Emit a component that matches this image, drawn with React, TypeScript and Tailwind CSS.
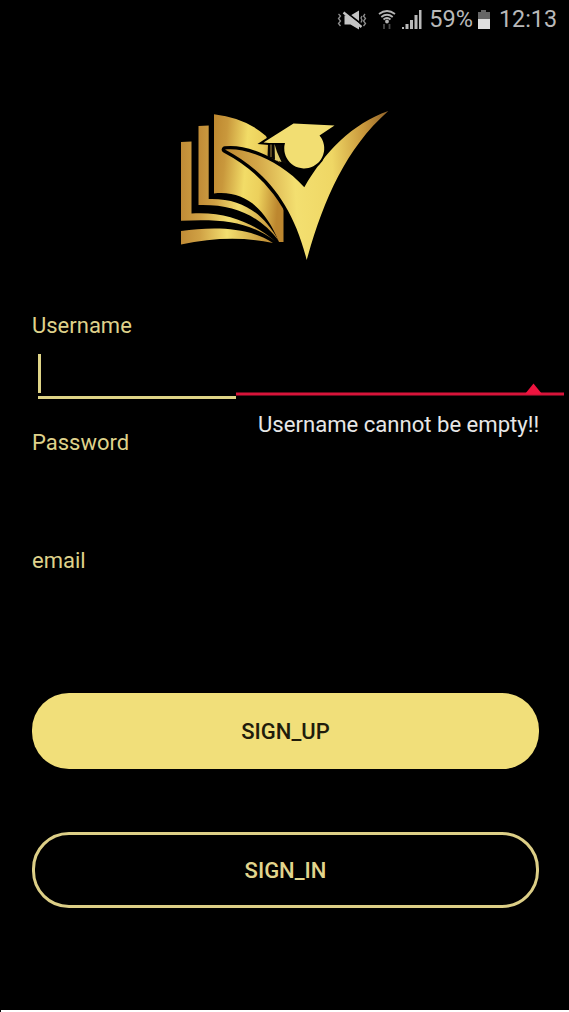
function StatusBar() {
  return (
    <header className="flex h-10 items-center justify-end pr-3 text-[#b9b9b9]">
      <svg className="mr-[11px]" width="30" height="20" viewBox="0 0 30 20" fill="none">
        <path d="M7.500 5.500h6l8.500-5v19l-8.500-5h-6z" fill="#c4c4c4" />
        <path d="M8 1.500l17 13" stroke="#000" strokeWidth="2" />
        <path d="M6.500 2.500l18 14.500" stroke="#c4c4c4" strokeWidth="2.400" />
        <path d="M1.500 4l2 2-2 2.500 2 2.500-2 2.500 2 2.500M28 4l-1.500 2 2 2.500-2 2.500 2 2.500-2 2.500M25 6l-1 2 1 2-1 2.500" stroke="#8e8e8e" strokeWidth="1.300" />
      </svg>
      <svg className="mr-1.5" width="18" height="20" viewBox="0 0 18 20" fill="none" stroke="#b5b5b5" strokeWidth="1.800">
        <path d="M1 4Q9-2 17 4M3.300 7Q9 2.500 14.700 7M5.500 9.500Q9 6.500 12.500 9.500" />
        <circle cx="9" cy="11.500" r="1" fill="#b5b5b5" />
        <path d="M6 14v5M11.500 14v5" stroke="#484848" />
      </svg>
      <svg className="mr-[7px]" width="20" height="20" viewBox="0 0 20 20" fill="#b9b9b9">
        <path d="M0 17h2v2H0zM3.500 14h3v5h-3zM8 10h3v9H8zM12.500 5h3v14h-3zM17 0h2.500v19H17z" />
      </svg>
      <span className="text-[23.500px] leading-none">59%</span>
      <svg className="ml-1 mr-2" width="14" height="20" viewBox="0 0 14 20">
        <path d="M4 0h5v2h4v7H1V2h3z" fill="#666" />
        <path d="M1 9h12v10H1z" fill="#dedede" />
      </svg>
      <span className="text-[23.300px] leading-none">12:13</span>
    </header>
  );
}

function Logo() {
  return (
    <svg className="mx-auto block" width="230" height="170" viewBox="170 100 230 170">
      <defs>
        <linearGradient id="page" x1="0" x2="1" y1="0" y2="0.150">
          <stop offset="0" stopColor="#bd872f" />
          <stop offset=".2" stopColor="#c9983c" />
          <stop offset=".5" stopColor="#f2dc67" />
          <stop offset=".72" stopColor="#ecd05c" />
          <stop offset="1" stopColor="#bd872f" />
        </linearGradient>
        <linearGradient id="leaf" x1="0" x2="1">
          <stop offset="0" stopColor="#c08b36" />
          <stop offset=".2" stopColor="#cfa044" />
          <stop offset=".5" stopColor="#f3df70" />
          <stop offset="1" stopColor="#bd872f" />
        </linearGradient>
        <linearGradient id="check" gradientUnits="userSpaceOnUse" x1="223" x2="389" y1="150" y2="140">
          <stop offset="0" stopColor="#bd872f" />
          <stop offset=".2" stopColor="#d3a648" />
          <stop offset=".42" stopColor="#f3df70" />
          <stop offset=".65" stopColor="#efd765" />
          <stop offset=".85" stopColor="#c9983c" />
          <stop offset="1" stopColor="#93652a" />
        </linearGradient>
      </defs>
      <path d="M181 231C211 227 247 226 273 243Q230 234 181 244.500Z" fill="url(#leaf)" />
      <path d="M181 142L191.500 141.500V213.500C228 211 256 225 275 241C248 221 222 219 181 220.700Z" fill="url(#leaf)" />
      <path d="M198.500 126L208.700 125.500V199C244 198 264 215 279 241C259 215 234 204 198.500 205Z" fill="url(#leaf)" />
      <path d="M214 114.300Q246 118 266 136L270 145L283.500 170V242H279C266 210 246 190 214 193.500Z" fill="url(#page)" />
      <path d="M225 149.500C246 147 281 161 304.300 187.300C325 151 352 124 388.300 111C345 149 323 202 306.700 260C293 205 266 171 225 149.500Z" fill="url(#check)" stroke="#000" strokeWidth="6.500" strokeLinejoin="round" paintOrder="stroke" />
      <path d="M268 144h16.500l-1 7 3 13-19-7z" fill="#090703" />
      <path d="M263.500 142.500L293.500 123.500L334.500 125.500L319.500 135.500A20 20 0 1 1 285 143H269Z" fill="#f2de72" stroke="#000" strokeWidth="4" paintOrder="stroke" />
      <path d="M274.500 144L277 152L281.500 162L275 160Z" fill="#e0cc6c" />
      <path d="M271 144.500V157" stroke="#a98c45" strokeWidth="1" />
    </svg>
  );
}

function Field({ label }: { label: string }) {
  return <label className="block h-[117.500px] text-[22px] leading-[26px] text-[#dfd28b]">{label}</label>;
}

export default function App() {
  return (
    <main className="flex h-[1012px] w-[569px] flex-col overflow-hidden bg-black font-['Roboto',sans-serif]">
      <StatusBar />
      <div className="pl-[1px] pt-[60px]">
        <Logo />
      </div>
      <form className="relative px-8 pt-[42.500px]">
        <Field label="Username" />
        <Field label="Password" />
        <Field label="email" />
        <div className="absolute left-[38px] top-[84px] h-[39px] w-[3px] bg-[#dfd487]" />
        <div className="absolute left-[38px] top-[126px] h-[3px] w-[198px] bg-[#dfd487]" />
        <div className="absolute left-[236px] top-[113px] w-[328px]">
          <svg className="block" width="328" height="14" viewBox="0 0 328 14" fill="#d7143a">
            <path d="M0 9.500H328V12.500H0Z" />
            <path d="M289 11L297.500 0.500L306 11Z" fill="#ee143f" />
          </svg>
          <p className="whitespace-nowrap pl-[22px] pt-[14px] text-[22.100px] leading-[26px] text-[#e7e7e7]">Username cannot be empty!!</p>
        </div>
        <button type="button" className="mt-[28px] block h-[76px] w-[507px] rounded-[37px] bg-[#f1df7a] pt-px text-[22px] font-medium text-[#211c0b]">SIGN_UP</button>
        <button type="button" className="mt-[63px] block h-[76px] w-[507px] rounded-[37px] border-[3px] border-[#ddcf87] pt-px text-[22px] font-medium text-[#e2d58d]">SIGN_IN</button>
      </form>
      <footer className="ml-px mt-auto h-[2px] bg-white" />
    </main>
  );
}
